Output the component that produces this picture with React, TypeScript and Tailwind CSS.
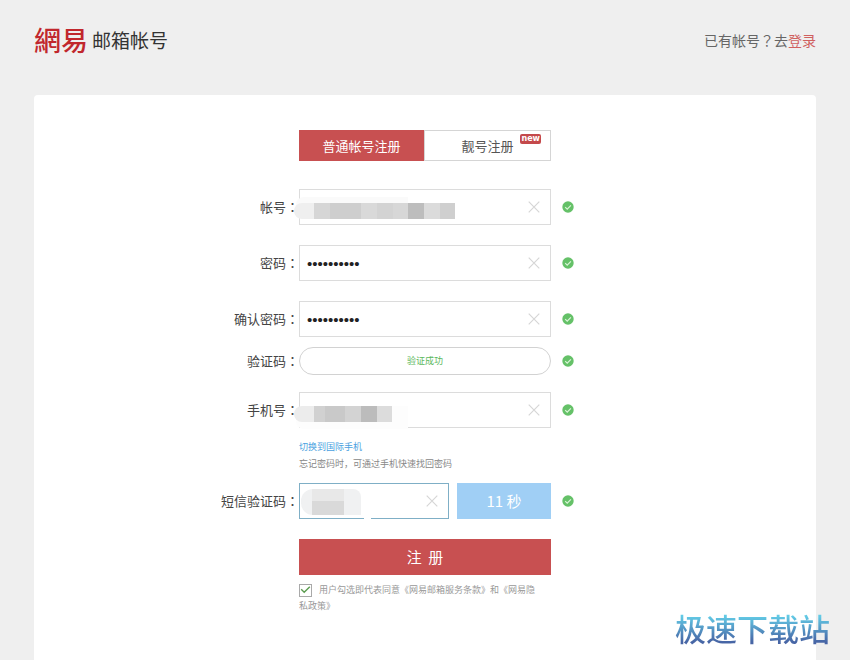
import React from 'react';

const CheckMark: React.FC = () => (
  <svg viewBox="0 0 12 12" className="w-3 h-3" aria-hidden="true">
    <circle cx="6" cy="6" r="5.7" fill="#65c168" />
    <path d="M3.2 6.1l2 2 3.7-3.8" fill="none" stroke="#d9f5d6" strokeWidth="1.2" />
  </svg>
);

const ClearButton: React.FC = () => (
  <button type="button" aria-label="清除" className="shrink-0 mr-[10px]">
    <svg viewBox="0 0 12 12" className="w-3 h-3" aria-hidden="true">
      <path d="M0.7 0.7l10.6 10.6M11.3 0.7L0.7 11.3" fill="none" stroke="#d6d6d6" strokeWidth="1.2" />
    </svg>
  </button>
);

type RowProps = {
  label: string;
  htmlFor?: string;
  className?: string;
  children: React.ReactNode;
};

const Row: React.FC<RowProps> = ({ label, htmlFor, className = '', children }) => (
  <div className={`grid grid-cols-[1fr_252px_1fr] items-center ${className}`}>
    <label htmlFor={htmlFor} className="text-right text-[13px] leading-5 text-[#444]">
      {label}
      <span lang="zh-TW" className="font-['Noto_Sans_CJK_TC',sans-serif]">：</span>
    </label>
    {children}
    <div className="pl-[11px]">
      <CheckMark />
    </div>
  </div>
);

const box = 'relative flex items-center h-9 border border-[#dcdcdc] bg-white';
const field = "flex-1 min-w-0 h-full px-[7px] outline-none bg-transparent text-[15px] text-[#222] font-['Liberation_Sans',sans-serif]";

const App: React.FC = () => {
  return (
    <div
      lang="zh-CN"
      className="min-h-screen flex flex-col px-[34px] bg-[#efefef] font-['Noto_Sans_CJK_SC',sans-serif]"
    >
      <header className="h-20 mb-[15px] flex items-center justify-between">
        <h1 className="flex items-center gap-1 font-normal">
          <span lang="zh-TW" className="text-[27px] leading-8 font-medium text-[#c1272d] font-['Noto_Sans_CJK_TC',sans-serif]">網易</span>
          <span className="text-[19px] leading-8 text-[#333]">邮箱帐号</span>
        </h1>
        <p className="text-sm text-[#666]">
          已有帐号<span lang="zh-TW" className="font-['Noto_Sans_CJK_TC',sans-serif]">？</span>去
          <a href="#login" className="text-[#d0605f]">登录</a>
        </p>
      </header>

      <main className="flex-1 bg-white rounded-t-[4px] pt-[35px] pb-12">
        <form>
          {/* Account type */}
          <div className="w-[252px] mx-auto flex text-[13px] leading-5">
            <button type="button" className="h-[31px] flex-1 bg-[#c85051] text-white">普通帐号注册</button>
            <button type="button" className="relative h-[31px] flex-1 border border-[#d5d5d5] text-[#555]">
              靓号注册
              <span className="absolute top-[3px] right-[9px] h-[10px] px-px rounded-[2px] bg-[#c4494b] text-white text-[8px] leading-[9px] font-bold font-['DejaVu_Sans',sans-serif]">
                new
              </span>
            </button>
          </div>

          <Row label="帐号" htmlFor="account" className="mt-7">
            <div className={box}>
              <input id="account" type="text" className={field} />
              <ClearButton />
              <div className="absolute -left-1 top-[7px] w-28 h-2 rounded-tl-lg bg-[#fafafa]"></div>
              <div className="absolute -left-[6px] top-[13px] flex h-4">
                <span className="w-5 rounded-l-lg bg-[#efefef]"></span>
                <span className="w-4 bg-[#d6d6d6]"></span>
                <span className="w-[31px] bg-[#cecece]"></span>
                <span className="w-4 bg-[#d9d9d9]"></span>
                <span className="w-4 bg-[#d3d3d3]"></span>
                <span className="w-[15px] bg-[#d7d7d7]"></span>
                <span className="w-4 bg-[#bdbdbd]"></span>
                <span className="w-4 bg-[#dbdbdb]"></span>
                <span className="w-[15px] bg-[#cfcfcf]"></span>
              </div>
            </div>
          </Row>

          <Row label="密码" htmlFor="password" className="mt-5">
            <div className={box}>
              <input id="password" type="password" defaultValue="abcdefghij" className={field} />
              <ClearButton />
            </div>
          </Row>

          <Row label="确认密码" htmlFor="confirm" className="mt-5">
            <div className={box}>
              <input id="confirm" type="password" defaultValue="abcdefghij" className={field} />
              <ClearButton />
            </div>
          </Row>

          <Row label="验证码" htmlFor="captcha" className="mt-[10px]">
            <output id="captcha" className="block h-7 rounded-full border border-[#d2d2d2] text-center text-[9px] leading-[26px] text-[#5cb85c]">
              验证成功
            </output>
          </Row>

          <Row label="手机号" htmlFor="phone" className="mt-[17px]">
            <div className={box}>
              <input id="phone" type="tel" className={field} />
              <ClearButton />
              <div className="absolute -left-1 top-[13px] w-28 h-[23px] rounded-l-lg bg-[#fdfdfd]"></div>
              <div className="absolute -left-[6px] top-[13px] flex h-4">
                <span className="w-5 rounded-l-lg bg-[#ececec]"></span>
                <span className="w-[11px] bg-[#d1d1d1]"></span>
                <span className="w-5 bg-[#c9c9c9]"></span>
                <span className="w-4 bg-[#d3d3d3]"></span>
                <span className="w-4 bg-[#bcbcbc]"></span>
                <span className="w-[15px] bg-[#dcdcdc]"></span>
              </div>
            </div>
          </Row>

          <div className="w-[252px] mx-auto mt-[10px] text-[9px] leading-[17px]">
            <a href="#intl" className="block text-[#4a9fe0]">切换到国际手机</a>
            <p className="text-[#888]">忘记密码时，可通过手机快速找回密码</p>
          </div>

          <Row label="短信验证码" htmlFor="sms" className="mt-[11px]">
            <div className="flex gap-2">
              <div className="relative flex-1 min-w-0 flex items-center h-9 border border-[#7fafc6] bg-white">
                <input id="sms" type="text" className={field} />
                <ClearButton />
                <div className="absolute left-px top-[5px] w-[60px] h-[26px] rounded-l-xl rounded-tr-lg overflow-hidden bg-[#f0f1f2]">
                  <div className="absolute left-[11px] top-0 w-8 h-3 bg-[#e8e8e8]"></div>
                  <div className="absolute left-[11px] top-3 w-8 h-[14px] bg-[#d9d9d9]"></div>
                </div>
                <div className="absolute left-16 -bottom-px w-[7px] h-px bg-white"></div>
              </div>
              <button type="button" className="shrink-0 w-[94px] h-9 bg-[#a0cff5] text-[15px] text-white">11 秒</button>
            </div>
          </Row>

          <div className="w-[252px] mx-auto mt-5">
            <button type="submit" className="block w-full h-9 bg-[#c85051] text-[15px] text-white">注&nbsp;&nbsp;册</button>
            <div className="relative mt-[7px] pr-1 text-[9px] leading-4 text-[#999]">
              <input
                id="agree"
                type="checkbox"
                defaultChecked
                className="peer appearance-none w-[13px] h-[13px] mr-[7px] align-middle border border-[#a9a9a9] bg-white"
              />
              <svg viewBox="0 0 13 13" className="absolute left-0 top-[1px] w-[13px] h-[13px] pointer-events-none invisible peer-checked:visible" aria-hidden="true">
                <path d="M2.2 6.2l3 3 5.6-5.4" fill="none" stroke="#5b9c4f" strokeWidth="1.4" />
              </svg>
              <label htmlFor="agree">
                用户勾选即代表同意《网易邮箱服务条款》和《网易隐<br />私政策》
              </label>
            </div>
          </div>
        </form>
      </main>

      <div className="fixed right-5 bottom-3 text-[31px] leading-10 font-medium bg-linear-to-b from-[#62cbe6] from-20% to-[#4765a5] to-85% bg-clip-text text-transparent">
        极速下载站
      </div>
    </div>
  );
};

export default App;
